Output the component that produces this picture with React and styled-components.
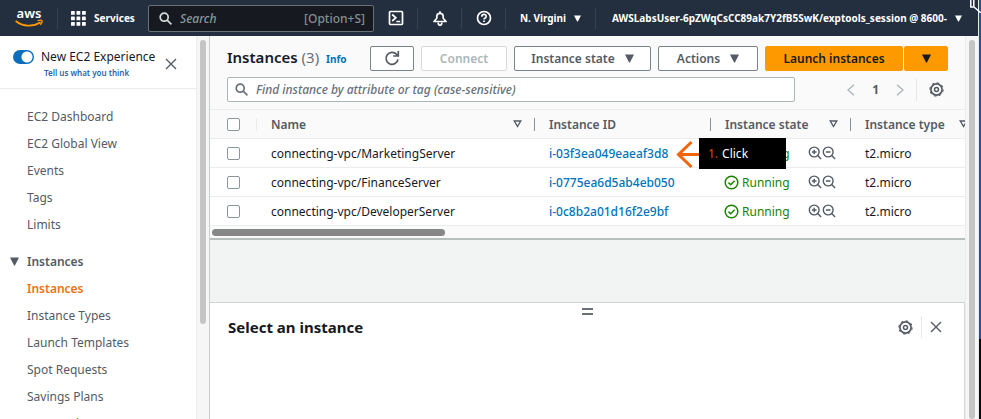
import React from "react";
import styled, { createGlobalStyle, css } from "styled-components";

const GlobalStyle = createGlobalStyle`
  * { box-sizing: border-box; }
  body { margin: 0; overflow: hidden; background: #fff; }
  body, button, input { font-family: "Noto Sans", "Open Sans", sans-serif; }
  button { cursor: pointer; }
`;

const Screen = styled.div`
  display: flex;
  height: 100vh;
  font-size: 12px;
  color: #16191f;
`;
const Page = styled.div`
  flex: 1;
  min-width: 0;
  display: flex;
  flex-direction: column;
`;
const Backdrop = styled.div`
  width: 3px;
  border-left: 1px solid #e4e7ec;
  background: linear-gradient(#2c4f8c 81%, #0b0b0d 81%);
`;

/* Top navigation */
const TopBar = styled.header`
  display: flex;
  align-items: center;
  height: 36px;
  flex: none;
  background: #232f3e;
  color: #fff;
`;
const BarItem = styled.button`
  display: flex;
  align-items: center;
  justify-content: center;
  gap: 8px;
  width: ${(p) => p.$width}px;
  height: 21px;
  flex: none;
  padding: 0;
  border: 0;
  border-left: ${(p) => (p.$line ? "1px solid #36414f" : "0")};
  background: none;
  color: inherit;
  font-size: 10px;
  font-weight: 700;
  white-space: nowrap;
`;
const HomeLink = styled.a`
  display: flex;
  justify-content: center;
  width: 57px;
  flex: none;
`;
const TopSearch = styled.label`
  display: flex;
  align-items: center;
  gap: 8px;
  flex: 1;
  min-width: 120px;
  height: 27px;
  padding: 0 8px 0 10px;
  border: 1px solid #687078;
  border-radius: 2px;
  background: #16191f;
  color: #b4bcbf;
`;
const BareInput = styled.input`
  flex: 1;
  min-width: 0;
  padding: 0;
  border: 0;
  outline: 0;
  background: none;
  color: inherit;
  font-size: 12px;
  font-weight: 500;
  &::placeholder { color: ${(p) => p.$hint}; font-style: italic; opacity: 1; }
`;
const Shortcut = styled.span`
  color: #84908f;
  font-weight: 500;
`;
const CornerMark = styled.svg`
  position: absolute;
  top: 0;
  right: 0;
`;

/* Body */
const Body = styled.div`
  flex: 1;
  min-height: 0;
  display: flex;
`;
const Sidebar = styled.aside`
  display: flex;
  width: 210px;
  flex: none;
  border-right: 1px solid #c9cdcd;
`;
const SideContent = styled.div`
  flex: 1;
  min-width: 0;
  overflow: hidden;
`;
const ScrollTrack = styled.div`
  width: 13px;
  flex: none;
  padding: 4px 3px 0 3px;
  background: #f6f6f6;
  border-left: 1px solid #ececec;
`;
const ScrollThumb = styled.div`
  height: ${(p) => p.$height};
  border-radius: 4px;
  background: #c5c5c5;
`;
const Intro = styled.div`
  display: flex;
  gap: 7px;
  height: 53px;
  padding: 11px 19px 8px 13px;
  border-bottom: 1px solid #eaeded;
`;
const IntroText = styled.div`
  flex: 1;
  display: flex;
  flex-direction: column;
  white-space: nowrap;
`;
const IntroTitle = styled.label`
  font-size: 12px;
  line-height: 20px;
`;
const Feedback = styled.a`
  padding-left: 3px;
  color: #1f66ad;
  font-size: 8px;
  font-weight: 600;
  line-height: 12px;
  text-decoration: none;
`;
const Toggle = styled.input`
  appearance: none;
  width: 21px;
  height: 14px;
  margin: 3px 0 0;
  border-radius: 7px;
  background: radial-gradient(circle at 14px 7px, #fff 5px, #0a6ebd 6px);
`;
const IconButton = styled.button`
  display: flex;
  align-items: center;
  justify-content: center;
  padding: 0;
  border: 0;
  background: none;
  color: #545b64;
`;
const Nav = styled.nav`
  padding: 14px 0 0 27px;
`;
const NavLink = styled.a`
  display: block;
  color: ${(p) => (p.$active ? "#ec7211" : "#545b64")};
  font-weight: ${(p) => (p.$active ? 600 : 400)};
  line-height: 27px;
  text-decoration: none;
  white-space: nowrap;
`;
const NavSection = styled.button`
  display: flex;
  align-items: center;
  gap: 8px;
  height: 27px;
  margin: 10px 0 0 -17px;
  padding: 0;
  border: 0;
  background: none;
  color: #545b64;
  font-size: 12px;
  font-weight: 600;
`;

const Main = styled.main`
  flex: 1;
  min-width: 0;
  display: flex;
  flex-direction: column;
  background: #f2f3f3;
`;
const Panel = styled.section`
  background: #fafafa;
  border-bottom: 2px solid #b9bebe;
`;
const Actions = styled.div`
  display: flex;
  align-items: center;
  gap: 7px;
  padding: 9px 17px 0 17px;
`;
const Title = styled.h1`
  flex: 1;
  margin: 0;
  font-size: 15px;
  font-weight: 600;
  line-height: 24px;
  white-space: nowrap;
`;
const Count = styled.span`
  color: #687078;
  font-weight: 400;
`;
const Info = styled.a`
  margin-left: 3px;
  color: #0073bb;
  font-size: 10px;
  font-weight: 700;
  text-decoration: none;
`;
const Button = styled.button`
  display: flex;
  align-items: center;
  justify-content: center;
  gap: 10px;
  width: ${(p) => p.$width}px;
  height: 25px;
  flex: none;
  padding: 0;
  border: 1px solid #7b8288;
  border-radius: 2px;
  background: #fff;
  color: #545b64;
  font-size: 12px;
  font-weight: 600;
  white-space: nowrap;
  ${(p) => p.$primary && css`
    border-color: #ff9900;
    background: #ff9900;
    color: #16191f;
  `}
  &:disabled { border-color: #d5dbdb; color: #aab7b8; }
`;
const SplitButton = styled.div`
  display: flex;
  gap: 1px;
`;
const FilterRow = styled.div`
  display: flex;
  align-items: center;
  padding: 6px 21px 7px 17px;
`;
const Filter = styled.label`
  display: flex;
  align-items: center;
  gap: 8px;
  flex: 1;
  height: 25px;
  padding: 0 7px;
  border: 1px solid #aab7b8;
  border-radius: 2px;
  background: #fff;
  color: #687078;
`;
const Pager = styled.div`
  display: flex;
  align-items: center;
  gap: 17px;
  margin-left: 52px;
  color: #545b64;
  font-weight: 700;
`;
const Rule = styled.span`
  width: 1px;
  height: 22px;
  margin: 0 ${(p) => p.$space}px;
  background: #e4e8e8;
`;
const TableClip = styled.div`
  overflow: hidden;
`;
const Table = styled.table`
  width: max(100%, 770px);
  table-layout: fixed;
  border-collapse: collapse;
`;
const Col = styled.col`
  width: ${(p) => p.$width}px;
`;
const Th = styled.th`
  height: 29px;
  padding: 0 12px 0 0;
  border-top: 1px solid #eaeded;
  border-bottom: 1px solid #eaeded;
  color: #545b64;
  font-weight: 600;
  text-align: left;
  white-space: nowrap;
`;
const HeadInner = styled.div`
  display: flex;
  align-items: center;
  justify-content: space-between;
  height: 13px;
  padding-left: 14px;
  border-left: 1px solid ${(p) => p.$line || "#8a9196"};
`;
const Td = styled.td`
  position: relative;
  height: 29px;
  padding: 0 0 0 ${(p) => p.$pad || 15}px;
  border-bottom: 1px solid #eaeded;
  background: #fff;
  white-space: nowrap;
`;
const CheckTh = styled(Th)`
  padding: 0 0 0 17px;
`;
const Check = styled.input`
  appearance: none;
  display: block;
  width: 13px;
  height: 13px;
  margin: 0;
  border: 1px solid #8d979b;
  border-radius: 2px;
  background: #fff;
`;
const IdLink = styled.a`
  color: #0073bb;
  font-weight: 500;
  text-decoration: none;
`;
const State = styled.div`
  display: flex;
  align-items: center;
  justify-content: space-between;
  padding-right: 14px;
`;
const Status = styled.span`
  display: flex;
  align-items: center;
  gap: 3px;
  color: #1d8102;
`;
const Zooms = styled.span`
  display: flex;
  color: #545b64;
`;
const Callout = styled.div`
  position: absolute;
  top: -1px;
  left: -34px;
  z-index: 1;
  display: flex;
  align-items: center;
  color: #fff;
`;
const CalloutBox = styled.div`
  width: 87px;
  padding-left: 9px;
  background: #000;
  line-height: 31px;
`;
const Step = styled.span`
  margin-right: 4px;
  color: #d4500c;
`;
const HScroll = styled.div`
  padding: 3px 2px;
  height: 12px;
`;
const HThumb = styled.div`
  width: 31%;
  height: 7px;
  border-radius: 4px;
  background: #858886;
`;
const Split = styled.section`
  flex: 1;
  margin-top: 62px;
  border-top: 1px solid #cfd3d3;
  border-right: 1px solid #d5d9d9;
  background: #fff;
`;
const Grip = styled.div`
  width: 11px;
  height: 7px;
  margin: 5px auto 0;
  border: 0 solid #6a7078;
  border-width: 2px 0;
`;
const SplitHead = styled.div`
  display: flex;
  align-items: center;
  padding: 0 22px 0 18px;
`;
const SplitTitle = styled.h2`
  flex: 1;
  margin: 0;
  font-size: 15px;
  font-weight: 700;
  line-height: 24px;
`;

const Caret = ({ size = 9 }) => (
  <svg width={size} height={size} viewBox="0 0 8 8"><path d="M0 .5h8L4.4 7.5h-.8z" fill="currentColor" /></svg>
);
const SortIcon = () => (
  <svg width="9" height="8" viewBox="0 0 9 8"><path d="M1.2 1h6.6L4.5 6.4z" fill="none" stroke="currentColor" strokeWidth="1.3" /></svg>
);
const Search = ({ color }) => (
  <svg width="13" height="13" viewBox="0 0 13 13" fill="none" stroke={color} strokeWidth="1.7">
    <circle cx="5.2" cy="5.2" r="4" /><path d="M8.2 8.2l4.2 4.2" />
  </svg>
);
const Close = () => (
  <svg width="12" height="12" viewBox="0 0 12 12" stroke="currentColor" strokeWidth="1.4"><path d="M1 1l10 10M11 1L1 11" /></svg>
);
const Gear = () => (
  <svg width="15" height="15" viewBox="0 0 15 15" fill="none" stroke="currentColor">
    <circle cx="7.5" cy="7.5" r="5.6" strokeWidth="1.7" />
    <circle cx="7.5" cy="7.5" r="6.7" strokeWidth="1" strokeDasharray="2.6 2.66" />
    <circle cx="7.5" cy="7.5" r="2" strokeWidth="1.5" />
  </svg>
);
const Chevron = ({ flip }) => (
  <svg width="8" height="12" viewBox="0 0 8 12" fill="none" stroke="#aab7b8" strokeWidth="1.4">
    <path d={flip ? "M1 .8L7 6l-6 5.2" : "M7 .8L1 6l6 5.2"} />
  </svg>
);
const Glass = ({ plus }) => (
  <svg width="14" height="14" viewBox="0 0 14 14" fill="none" stroke="currentColor" strokeWidth="1.4">
    <circle cx="6.2" cy="6" r="4.9" /><path d="M9.7 9.5l3.4 3.4M3.9 6h4.6" />{plus && <path d="M6.2 3.7v4.6" />}
  </svg>
);
const Tick = () => (
  <svg width="15" height="15" viewBox="0 0 15 15" fill="none" stroke="currentColor" strokeWidth="1.5">
    <circle cx="7.5" cy="7.5" r="6.3" /><path d="M4.5 7.6l2.2 2.1 3.9-4" />
  </svg>
);
const Refresh = () => (
  <svg width="16" height="16" viewBox="0 0 16 16" fill="none" stroke="currentColor" strokeWidth="1.7">
    <path d="M14 9.3a6 6 0 1 1-1.6-5.1l1.2 1.6M14.3 1v5H9.2" />
  </svg>
);
const Grid = () => (
  <svg width="15" height="15" viewBox="0 0 15 15" fill="#fff">
    {[0, 5.5, 11].flatMap((y) => [0, 5.5, 11].map((x) => <rect key={x + "-" + y} x={x} y={y} width="3.8" height="3.8" rx=".5" />))}
  </svg>
);
/* Lettering is live text; the smile is two strokes. */
const Logo = () => (
  <svg width="28" height="28" viewBox="0 0 28 28" role="img" aria-label="aws">
    <text x="14" y="14" textAnchor="middle" fill="#fff" fontFamily="Noto Sans, sans-serif" fontSize="13" fontWeight="600">aws</text>
    <path d="M.6 17c7.5 6 17.5 6 25 1.300" fill="none" stroke="#ff9900" strokeWidth="1.7" />
    <path d="M22.6 16.700c2.400-.6 4.300-.5 4.500 0s-.4 2.600-1.700 4.200" fill="none" stroke="#ff9900" strokeWidth="1.3" />
  </svg>
);
const Shell = () => (
  <svg width="16" height="16" viewBox="0 0 16 16" fill="none" stroke="#fff" strokeWidth="1.7">
    <rect x="1.5" y="1.5" width="13" height="13" rx="1" /><path d="M4.2 4.500l3.600 3.300L4.200 11M8.300 11.500h3.900" />
  </svg>
);
const Bell = () => (
  <svg width="14" height="15" viewBox="0 0 14 15" fill="none" stroke="#fff" strokeWidth="1.7" strokeLinejoin="round">
    <path d="M1 10.500L3.800 7.200V5.500a3.200 3.200 0 0 1 6.400 0v1.700L13 10.500zM7 2V.3" /><path d="M5.300 11.500v1a1.700 1.700 0 0 0 3.400 0v-1" />
  </svg>
);
const Help = () => (
  <svg width="16" height="16" viewBox="0 0 16 16" fill="none" stroke="#fff" strokeWidth="1.7">
    <circle cx="8" cy="8" r="6.500" /><path d="M5.800 6.700c0-3 4.400-2.900 4.400-.3 0 1.600-2.200 1.500-2.200 3.100M8 10.500v1.500" />
  </svg>
);

const links = ["EC2 Dashboard", "EC2 Global View", "Events", "Tags", "Limits"];
const instanceLinks = ["Instances", "Instance Types", "Launch Templates", "Spot Requests", "Savings Plans", "Reserved Instances"];
const rows = [
  ["connecting-vpc/MarketingServer", "i-03f3ea049eaeaf3d8"],
  ["connecting-vpc/FinanceServer", "i-0775ea6d5ab4eb050"],
  ["connecting-vpc/DeveloperServer", "i-0c8b2a01d16f2e9bf"],
];

export default function App() {
  return (
    <Screen>
      <GlobalStyle />
      <Page>
        <TopBar>
          <HomeLink href="#home"><Logo /></HomeLink>
          <BarItem $line $width={91}><Grid />Services</BarItem>
          <TopSearch>
            <Search color="#d5dbdb" />
            <BareInput type="search" placeholder="Search" aria-label="Search" $hint="#8d9899" />
            <Shortcut>[Option+S]</Shortcut>
          </TopSearch>
          <BarItem $width={43} aria-label="CloudShell"><Shell /></BarItem>
          <BarItem $line $width={44} aria-label="Notifications"><Bell /></BarItem>
          <BarItem $line $width={44} aria-label="Help"><Help /></BarItem>
          <BarItem $line $width={90}>N. Virgini<Caret size={7} /></BarItem>
          <BarItem $line $width={383}>AWSLabsUser-6pZWqCsCC89ak7Y2fB5SwK/exptools_session @ 8600-<Caret size={7} /></BarItem>
        </TopBar>
        <Body>
          <Sidebar>
            <SideContent>
              <Intro>
                <Toggle type="checkbox" id="experience" defaultChecked />
                <IntroText>
                  <IntroTitle htmlFor="experience">New EC2 Experience</IntroTitle>
                  <Feedback href="#feedback">Tell us what you think</Feedback>
                </IntroText>
                <IconButton aria-label="Close"><Close /></IconButton>
              </Intro>
              <Nav>
                {links.map((l) => <NavLink key={l} href="#nav">{l}</NavLink>)}
                <NavSection><Caret />Instances</NavSection>
                {instanceLinks.map((l, i) => <NavLink key={l} href="#nav" $active={i === 0}>{l}</NavLink>)}
              </Nav>
            </SideContent>
            <ScrollTrack><ScrollThumb $height="75%" /></ScrollTrack>
          </Sidebar>
          <Main>
            <Panel>
              <Actions>
                <Title>Instances <Count>(3)</Count> <Info href="#info">Info</Info></Title>
                <Button $width={44} aria-label="Refresh"><Refresh /></Button>
                <Button $width={86} disabled>Connect</Button>
                <Button $width={137}>Instance state<Caret /></Button>
                <Button $width={100}>Actions<Caret /></Button>
                <SplitButton>
                  <Button $primary $width={138}>Launch instances</Button>
                  <Button $primary $width={44} aria-label="More launch options"><Caret /></Button>
                </SplitButton>
              </Actions>
              <FilterRow>
                <Filter>
                  <Search color="#687078" />
                  <BareInput placeholder="Find instance by attribute or tag (case-sensitive)" aria-label="Find instance" $hint="#687078" />
                </Filter>
                <Pager>
                  <IconButton aria-label="Previous page"><Chevron /></IconButton>
                  1
                  <IconButton aria-label="Next page"><Chevron flip /></IconButton>
                </Pager>
                <Rule $space={12} />
                <IconButton aria-label="Preferences"><Gear /></IconButton>
              </FilterRow>
              <TableClip>
                <Table>
                  <colgroup><Col $width={46} /><Col $width={278} /><Col $width={176} /><Col $width={140} /><Col $width={130} /></colgroup>
                  <thead>
                    <tr>
                      <CheckTh><Check type="checkbox" aria-label="Select all" /></CheckTh>
                      <Th><HeadInner $line="#eaeded">Name<SortIcon /></HeadInner></Th>
                      <Th><HeadInner>Instance ID</HeadInner></Th>
                      <Th><HeadInner>Instance state<SortIcon /></HeadInner></Th>
                      <Th><HeadInner>Instance type<SortIcon /></HeadInner></Th>
                    </tr>
                  </thead>
                  <tbody>
                    {rows.map(([name, id], i) => (
                      <tr key={id}>
                        <Td $pad={17}><Check type="checkbox" aria-label={name} /></Td>
                        <Td>{name}</Td>
                        <Td><IdLink href="#instance">{id}</IdLink></Td>
                        <Td $pad={14}>
                          <State>
                            <Status><Tick />Running</Status>
                            <Zooms><Glass plus /><Glass /></Zooms>
                          </State>
                          {i === 0 && (
                            <Callout>
                              <svg width="23" height="30" viewBox="0 0 23 30" fill="none" stroke="#f0640c" strokeWidth="3">
                                <path d="M15.5 3L2.500 15.500 15.500 28M3 15.500h20" />
                              </svg>
                              <CalloutBox><Step>1.</Step>Click</CalloutBox>
                            </Callout>
                          )}
                        </Td>
                        <Td>t2.micro</Td>
                      </tr>
                    ))}
                  </tbody>
                </Table>
              </TableClip>
              <HScroll><HThumb /></HScroll>
            </Panel>
            <Split>
              <Grip />
              <SplitHead>
                <SplitTitle>Select an instance</SplitTitle>
                <IconButton aria-label="Panel preferences"><Gear /></IconButton>
                <Rule $space={8} />
                <IconButton aria-label="Close panel"><Close /></IconButton>
              </SplitHead>
            </Split>
          </Main>
          <ScrollTrack><ScrollThumb $height="100%" /></ScrollTrack>
        </Body>
      </Page>
      <Backdrop />
      <CornerMark width="11" height="13" viewBox="0 0 11 13" fill="none" stroke="#fff" strokeWidth="1.5">
        <path d="M.8 0v7h3V0M4 7l7 6" />
      </CornerMark>
    </Screen>
  );
}
